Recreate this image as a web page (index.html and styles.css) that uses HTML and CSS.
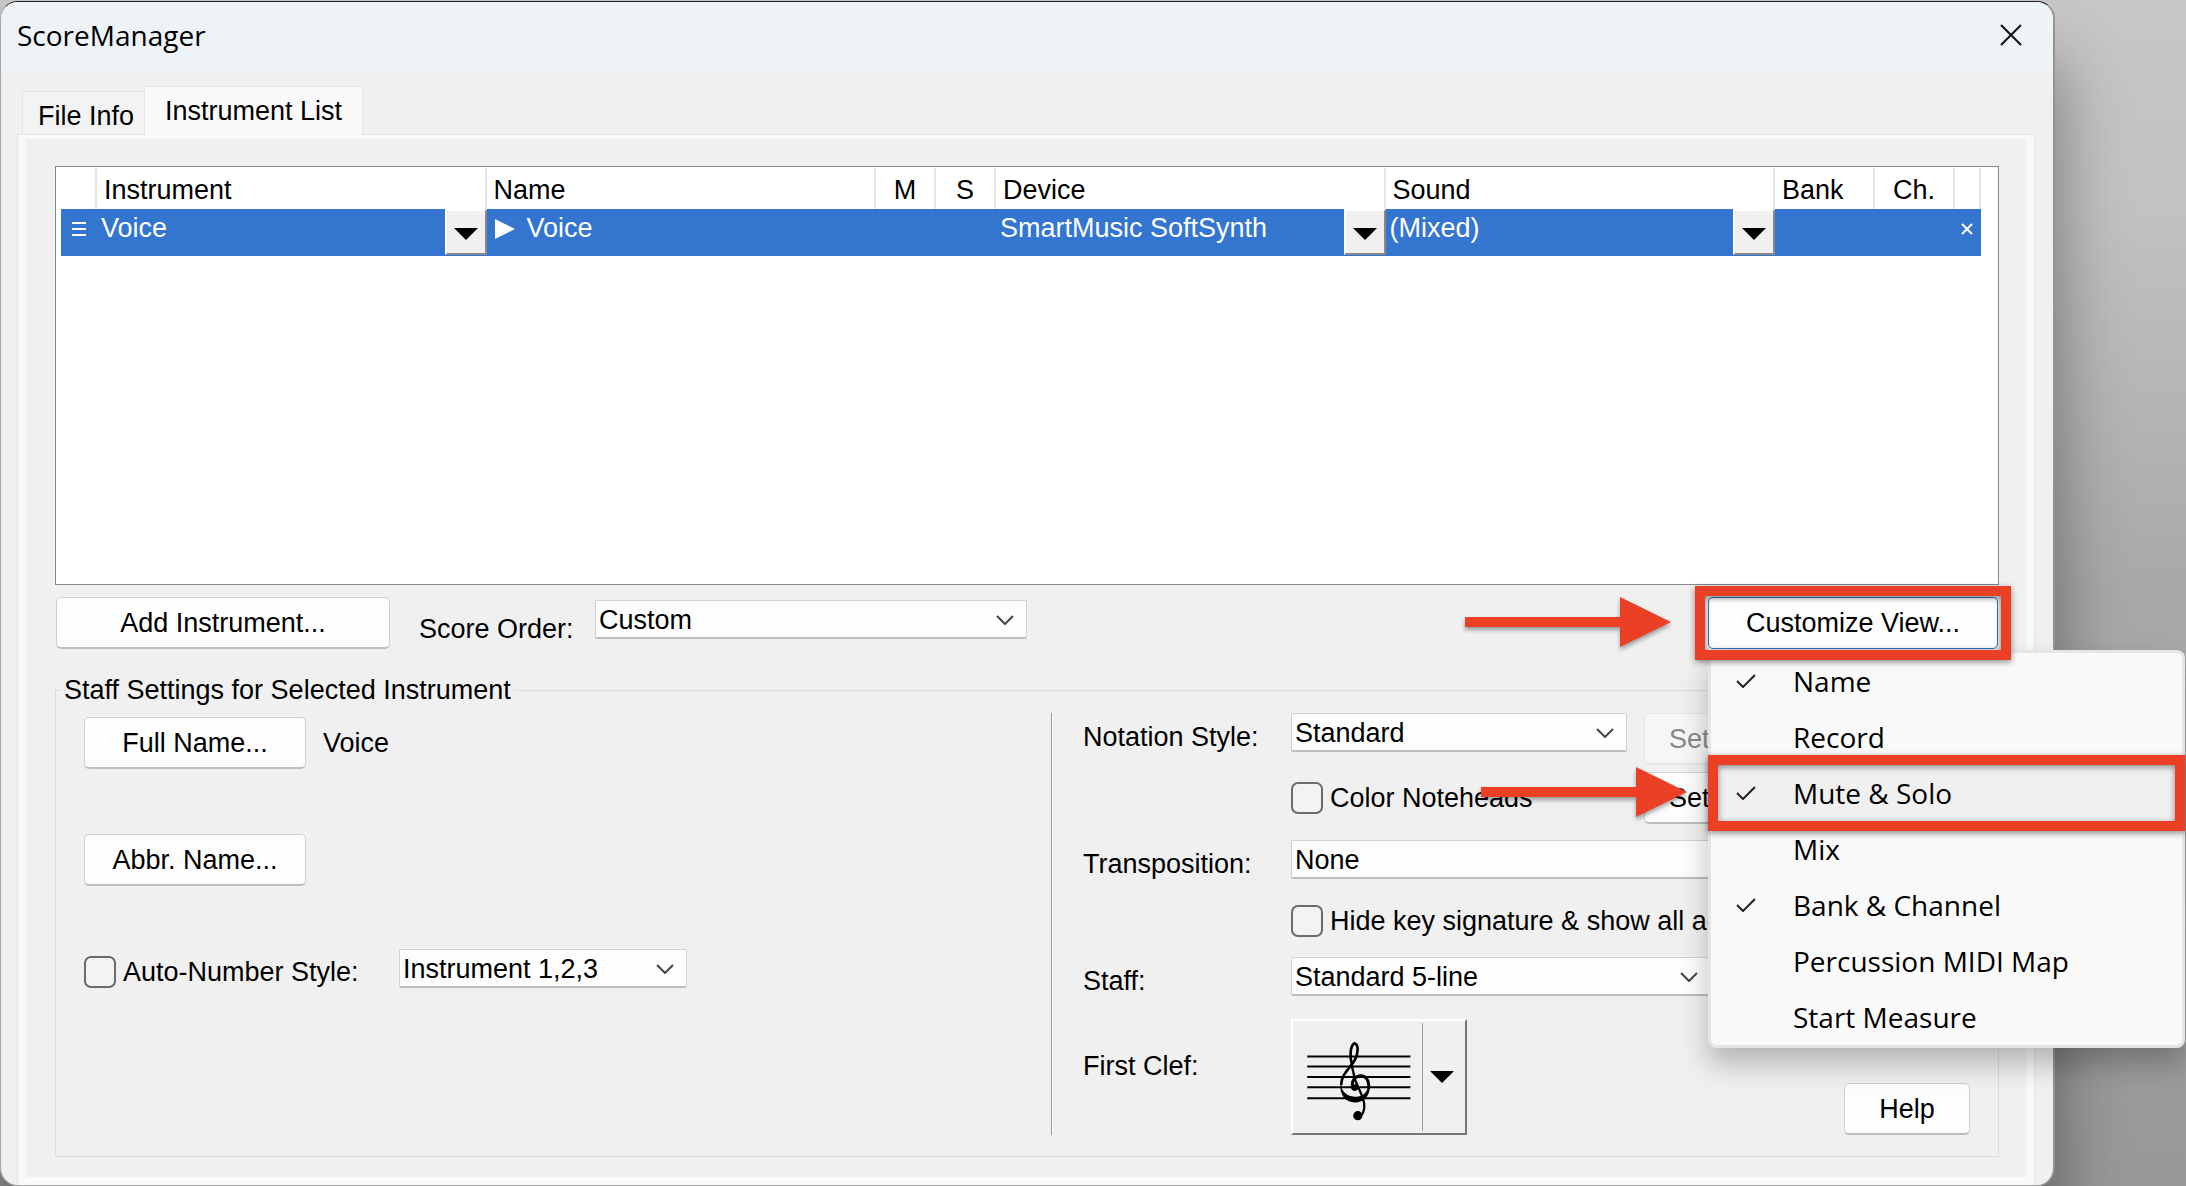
FILE: index.html
```
<!DOCTYPE html>
<html lang="en">
<head>
<meta charset="utf-8">
<title>ScoreManager</title>
<link rel="stylesheet" href="styles.css">
</head>
<body>
<svg width="0" height="0" class="sprite" aria-hidden="true">
  <symbol id="chevron" viewBox="0 0 18 10"><path d="M1 1l8 8 8-8" fill="none" stroke="#444" stroke-width="2"/></symbol>
  <symbol id="triangle" viewBox="0 0 24 12"><path d="M0 0h24L12 12z"/></symbol>
  <symbol id="check" viewBox="0 0 20 14"><path d="M1 7l6 6L19 1" fill="none" stroke="#222" stroke-width="2"/></symbol>
  <symbol id="arrow" viewBox="0 0 206 50"><path d="M0 20h155V0l51 25-51 25V30H0z" fill="#eb4026"/></symbol>
</svg>

<main class="window">
  <header class="titlebar">
    <h1 class="title">ScoreManager</h1>
    <button class="close" type="button" aria-label="Close">
      <svg width="22" height="22" viewBox="0 0 22 22"><path d="M1 1l20 20M21 1L1 21" stroke="#111" stroke-width="2"/></svg>
    </button>
  </header>

  <nav class="tabs" role="tablist">
    <button class="tab" type="button" role="tab">File Info</button>
    <button class="tab tab-active" type="button" role="tab" aria-selected="true">Instrument List</button>
  </nav>

  <section class="pane">
    <div class="listbox">
      <table class="list">
        <colgroup>
          <col class="c-handle"><col><col><col class="c-flag"><col class="c-flag"><col><col><col class="c-bank"><col class="c-channel"><col class="c-remove">
        </colgroup>
        <thead>
          <tr><th></th><th>Instrument</th><th>Name</th><th class="center">M</th><th class="center">S</th><th>Device</th><th>Sound</th><th>Bank</th><th class="center">Ch.</th><th></th></tr>
        </thead>
        <tbody>
          <tr>
            <td><svg class="handle" width="14" height="14" viewBox="0 0 14 14"><path d="M0 1h14M0 7h14M0 13h14" stroke="#fff" stroke-width="2"/></svg></td>
            <td><div class="cell"><span>Voice</span><button class="drop" type="button" aria-label="Choose instrument"><svg width="24" height="12"><use href="#triangle"/></svg></button></div></td>
            <td><div class="cell cell-name"><svg width="20" height="20" viewBox="0 0 20 20"><path d="M0 0l20 10L0 20z" fill="#fff"/></svg><span>Voice</span></div></td>
            <td></td>
            <td></td>
            <td><div class="cell"><span>SmartMusic SoftSynth</span><button class="drop" type="button" aria-label="Choose device"><svg width="24" height="12"><use href="#triangle"/></svg></button></div></td>
            <td><div class="cell"><span>(Mixed)</span><button class="drop" type="button" aria-label="Choose sound"><svg width="24" height="12"><use href="#triangle"/></svg></button></div></td>
            <td></td>
            <td></td>
            <td><button class="remove" type="button" aria-label="Remove"><svg width="12" height="12" viewBox="0 0 12 12"><path d="M1 1l10 10M11 1L1 11" stroke="#fff" stroke-width="2"/></svg></button></td>
          </tr>
        </tbody>
      </table>
    </div>

    <div class="toolbar">
      <button class="button add" type="button">Add Instrument...</button>
      <label class="order-label" for="order">Score Order:</label>
      <span class="select order"><select id="order"><option>Custom</option></select><svg width="18" height="10"><use href="#chevron"/></svg></span>
      <div class="customize">
        <button class="button button-focus" type="button">Customize View...</button>
        <svg class="arrow" width="206" height="50"><use href="#arrow"/></svg>
        <ul class="menu" role="menu">
          <li class="item" role="menuitem"><svg width="20" height="14"><use href="#check"/></svg><span>Name</span></li>
          <li class="item" role="menuitem"><span>Record</span></li>
          <li class="item item-hot" role="menuitem"><svg width="20" height="14"><use href="#check"/></svg><span>Mute &amp; Solo</span>
            <svg class="arrow" width="206" height="50"><use href="#arrow"/></svg></li>
          <li class="item" role="menuitem"><span>Mix</span></li>
          <li class="item" role="menuitem"><svg width="20" height="14"><use href="#check"/></svg><span>Bank &amp; Channel</span></li>
          <li class="item" role="menuitem"><span>Percussion MIDI Map</span></li>
          <li class="item" role="menuitem"><span>Start Measure</span></li>
        </ul>
      </div>
    </div>

    <fieldset class="staff">
      <legend>Staff Settings for Selected Instrument</legend>
      <div class="columns">
        <div class="names">
          <div class="name-row"><button class="button" type="button">Full Name...</button><span>Voice</span></div>
          <div class="name-row"><button class="button" type="button">Abbr. Name...</button></div>
          <div class="number-row">
            <label class="tick"><input type="checkbox">Auto-Number Style:</label>
            <span class="select number"><select aria-label="Auto-number style"><option>Instrument 1,2,3</option></select><svg width="18" height="10"><use href="#chevron"/></svg></span>
          </div>
        </div>
        <div class="notation">
          <label class="label" for="style">Notation Style:</label>
          <div class="line">
            <span class="select style"><select id="style"><option>Standard</option></select><svg width="18" height="10"><use href="#chevron"/></svg></span>
            <button class="button set" type="button" disabled>Settings...</button>
          </div>
          <div class="line line-ticks">
            <label class="tick noteheads"><input type="checkbox">Color Noteheads</label>
            <button class="button set" type="button">Settings...</button>
          </div>
          <label class="label" for="transposition">Transposition:</label>
          <div class="line line-transposition">
            <span class="select transposition"><select id="transposition"><option>None</option></select><svg width="18" height="10"><use href="#chevron"/></svg></span>
          </div>
          <div class="line line-ticks">
            <label class="tick"><input type="checkbox">Hide key signature &amp; show all accidentals</label>
          </div>
          <label class="label" for="kind">Staff:</label>
          <div class="line">
            <span class="select kind"><select id="kind"><option>Standard 5-line</option></select><svg width="18" height="10"><use href="#chevron"/></svg></span>
          </div>
          <span class="label label-clef">First Clef:</span>
          <div class="line line-clef">
            <button class="clef" type="button" aria-label="First clef">
              <svg class="glyph" width="130" height="108" viewBox="68 68 390 324">
                <path d="M111 168h312M111 198h312M111 230h312M111 261h312M111 294h312" stroke="#000" stroke-width="6"/>
                <g fill="none" stroke="#000" stroke-linecap="round">
                  <path d="M246 192C238 165 242 134 254 128C267 132 266 160 254 180C240 204 214 222 214 252" stroke-width="8"/>
                  <path d="M245 192L256 240L278 290C286 312 286 335 272 349" stroke-width="7"/>
                  <path d="M297 262C298 236 285 226 273 226C256 227 246 240 247 254C248 266 256 270 261 263" stroke-width="9"/>
                </g>
                <path d="M211 250C216 280 236 290 258 290C282 290 294 276 296 250L301 254C301 288 282 307 255 307C226 306 209 286 211 250z"/>
                <circle cx="264" cy="347" r="14"/><circle cx="254" cy="262" r="10"/>
              </svg>
              <svg width="24" height="12"><use href="#triangle"/></svg>
            </button>
            <button class="button help" type="button">Help</button>
          </div>
        </div>
      </div>
    </fieldset>
  </section>
</main>
</body>
</html>
```
FILE: styles.css
```
* { box-sizing: border-box; }

body {
  margin: 0;
  padding: 1px 131px 0 0;
  min-height: 100vh;
  overflow: hidden;
  background: linear-gradient(#c8c6c6, #c2c2c2 200px, #a9a9a9 580px, #989898);
  font: 27px/30px "Liberation Sans", Arial, sans-serif;
  color: #000;
}

button, select, input { font: inherit; color: inherit; margin: 0; }
svg { display: block; }
.sprite { position: absolute; }

.window {
  border: 1px solid #a8a8a8;
  border-top-color: #222;
  border-right: 2px solid #949494;
  border-radius: 18px;
  background: #f0f0f0;
  box-shadow: 0 60px 70px rgba(0, 0, 0, .4);
}

.titlebar {
  display: flex;
  align-items: center;
  justify-content: space-between;
  height: 68px;
  padding: 0 31px 2px 16px;
  border-radius: 17px 17px 0 0;
  background: #eef3f8;
}
.title { margin: 0; font: 28px/38px "Open Sans", "Noto Sans", sans-serif; }
.close { padding: 0; border: 0; background: none; }

.tabs { display: flex; align-items: flex-end; height: 64px; padding-left: 21px; }
.tab {
  height: 43px;
  padding: 5px 10px 0 15px;
  border: 1px solid #e3e3e3;
  border-width: 1px 0 0 1px;
  background: #f3f3f3;
}
.tab-active {
  height: 49px;
  padding: 0 20px 0;
  border-width: 1px 1px 0;
  background: #f9f9f9;
  margin-bottom: -1px;
  z-index: 1;
}

.pane {
  margin: 0 18px 0 16px;
  padding: 31px 35px 28px 37px;
  border: 1px solid #e3e3e3;
  border-bottom: 0;
  box-shadow: inset 0 4px #f9f9f9, inset 8px 0 #f9f9f9, inset -8px 0 #f9f9f9, inset 0 -8px #f9f9f9;
}

.listbox {
  min-height: 419px;
  padding: 1px 17px 0 5px;
  border: 1px solid #828790;
  background: #fff;
}
.list { width: 100%; border-collapse: separate; border-spacing: 0; table-layout: fixed; }
.list th, .list td { padding: 0; text-align: left; font-weight: normal; }
.list th { height: 41px; padding: 3px 0 0 7px; border-right: 2px solid #e5e5e5; }
.list th.center { padding-left: 0; text-align: center; }
.list td { height: 47px; background: #3375cf; color: #fff; }
.c-handle { width: 36px; }
.c-flag { width: 60px; }
.c-bank { width: 100px; }
.c-channel { width: 80px; }
.c-remove { width: 26px; }
.cell { display: flex; justify-content: space-between; height: 47px; padding-left: 4px; }
.cell span { padding-top: 4px; }
.cell-name { justify-content: flex-start; gap: 12px; padding-left: 8px; }
.cell-name svg { margin-top: 10px; }
.handle { margin: 0 0 8px 11px; }
.drop {
  display: grid;
  place-items: center;
  width: 42px;
  height: 46px;
  padding: 3px 0 0;
  border: 2px solid;
  border-color: #fff #888 #888 #fff;
  background: #f0f0f0;
}
.remove { display: block; padding: 0; margin: 0 0 8px 6px; border: 0; background: none; }

.button {
  height: 52px;
  padding: 0;
  border: 1px solid #d0d0d0;
  border-bottom: 2px solid #bdbdbd;
  border-radius: 5px;
  background: #fdfdfd;
  text-align: center;
}
.button:disabled { border-color: #e6e6e6; background: #f6f6f6; color: #888; }
.button-focus { width: 290px; border: 1px solid #3571c0; }

.select { display: grid; align-items: center; }
.select > * { grid-area: 1 / 1; }
.select svg { justify-self: end; margin-right: 13px; pointer-events: none; }
.select select {
  appearance: none;
  width: 100%;
  height: 39px;
  padding: 2px 3px 0;
  border: 1px solid #d0d0d0;
  border-bottom: 2px solid #bdbdbd;
  border-radius: 2px;
  background: #fdfdfd;
}

.tick { display: flex; align-items: center; gap: 7px; white-space: nowrap; }
.tick input {
  appearance: none;
  flex: none;
  width: 32px;
  height: 32px;
  border: 2px solid #6b6b6b;
  border-radius: 7px;
  background: #f3f3f3;
}

.toolbar { display: flex; align-items: center; margin-top: 12px; }
.add { width: 334px; margin-left: 1px; }
.order-label { padding-top: 11px; margin-left: 29px; width: 176px; }
.order { width: 432px; padding-bottom: 7px; }
.customize { position: relative; z-index: 2; margin-left: auto; margin-right: 1px; }
.customize::after, .item-hot::after {
  content: "";
  position: absolute;
  border: 10px solid #eb4026;
  filter: drop-shadow(0 2px 3px rgba(0, 0, 0, .45));
  pointer-events: none;
}
.customize::after { inset: -11px -13px; }
.arrow {
  position: absolute;
  right: calc(100% + 37px);
  top: 0;
  overflow: visible;
  filter: drop-shadow(0 3px 2px rgba(0, 0, 0, .35));
}

.menu {
  position: absolute;
  left: 0;
  top: calc(100% + 1px);
  width: 477px;
  margin: 0;
  padding: 0;
  list-style: none;
  border: 3px solid #e5e5e5;
  border-radius: 8px;
  background: #f9f9f9;
  box-shadow: 0 16px 28px rgba(0, 0, 0, .25);
  font: 28px/38px "Open Sans", "Noto Sans", sans-serif;
}
.item {
  position: relative;
  display: grid;
  grid-template-columns: 57px 1fr;
  align-items: center;
  height: 56px;
  padding-left: 25px;
}
.item span { grid-column: 2; }
.item > * { grid-row: 1; }
.item-hot { background: #f0f0f0; }
.item-hot::after { inset: -10px -3px; }
.item-hot .arrow { right: calc(100% + 24px); top: 2px; }

.staff {
  min-width: 0;
  margin: 26px 0 0;
  padding: 8px 0 21px;
  border: 1px solid #dcdcdc;
}
.staff legend { margin-left: 5px; padding: 0 3px; }
.columns { display: grid; grid-template-columns: minmax(0, 995fr) minmax(0, 947fr); }
.names { padding: 4px 0 0 28px; }
.name-row { display: flex; align-items: center; gap: 17px; margin-bottom: 65px; }
.name-row .button { width: 222px; }
.number-row { display: flex; align-items: flex-end; margin-top: -2px; }
.number-row .tick { width: 315px; }
.number { width: 288px; }

.notation {
  display: grid;
  grid-template-columns: 208px minmax(0, 1fr);
  align-items: start;
  padding: 0 28px 0 31px;
  border-left: 1px solid #999;
  box-shadow: inset 1px 0 #fff;
}
.label { grid-column: 1; padding-top: 9px; }
.line { grid-column: 2; display: flex; align-items: flex-start; gap: 17px; min-height: 59px; }
.line-ticks { min-height: 68px; }
.line-ticks .tick { height: 52px; }
.line-transposition { min-height: 55px; }
.line-transposition + .line-ticks { min-height: 62px; }
.style { width: 336px; }
.set { width: 170px; }
.noteheads { width: 336px; }
.transposition { flex: 1; }
.kind { width: 420px; }
.line-clef { justify-content: space-between; align-items: flex-end; margin-top: 3px; }
.label-clef { padding-top: 35px; }
.clef {
  display: flex;
  align-items: center;
  width: 176px;
  height: 116px;
  padding: 0;
  border: 2px solid;
  border-color: #fff #777 #777 #fff;
  background: #f0f0f0;
}
.glyph { border-right: 1px solid #999; margin-right: 7px; }
.help { width: 126px; }
```
